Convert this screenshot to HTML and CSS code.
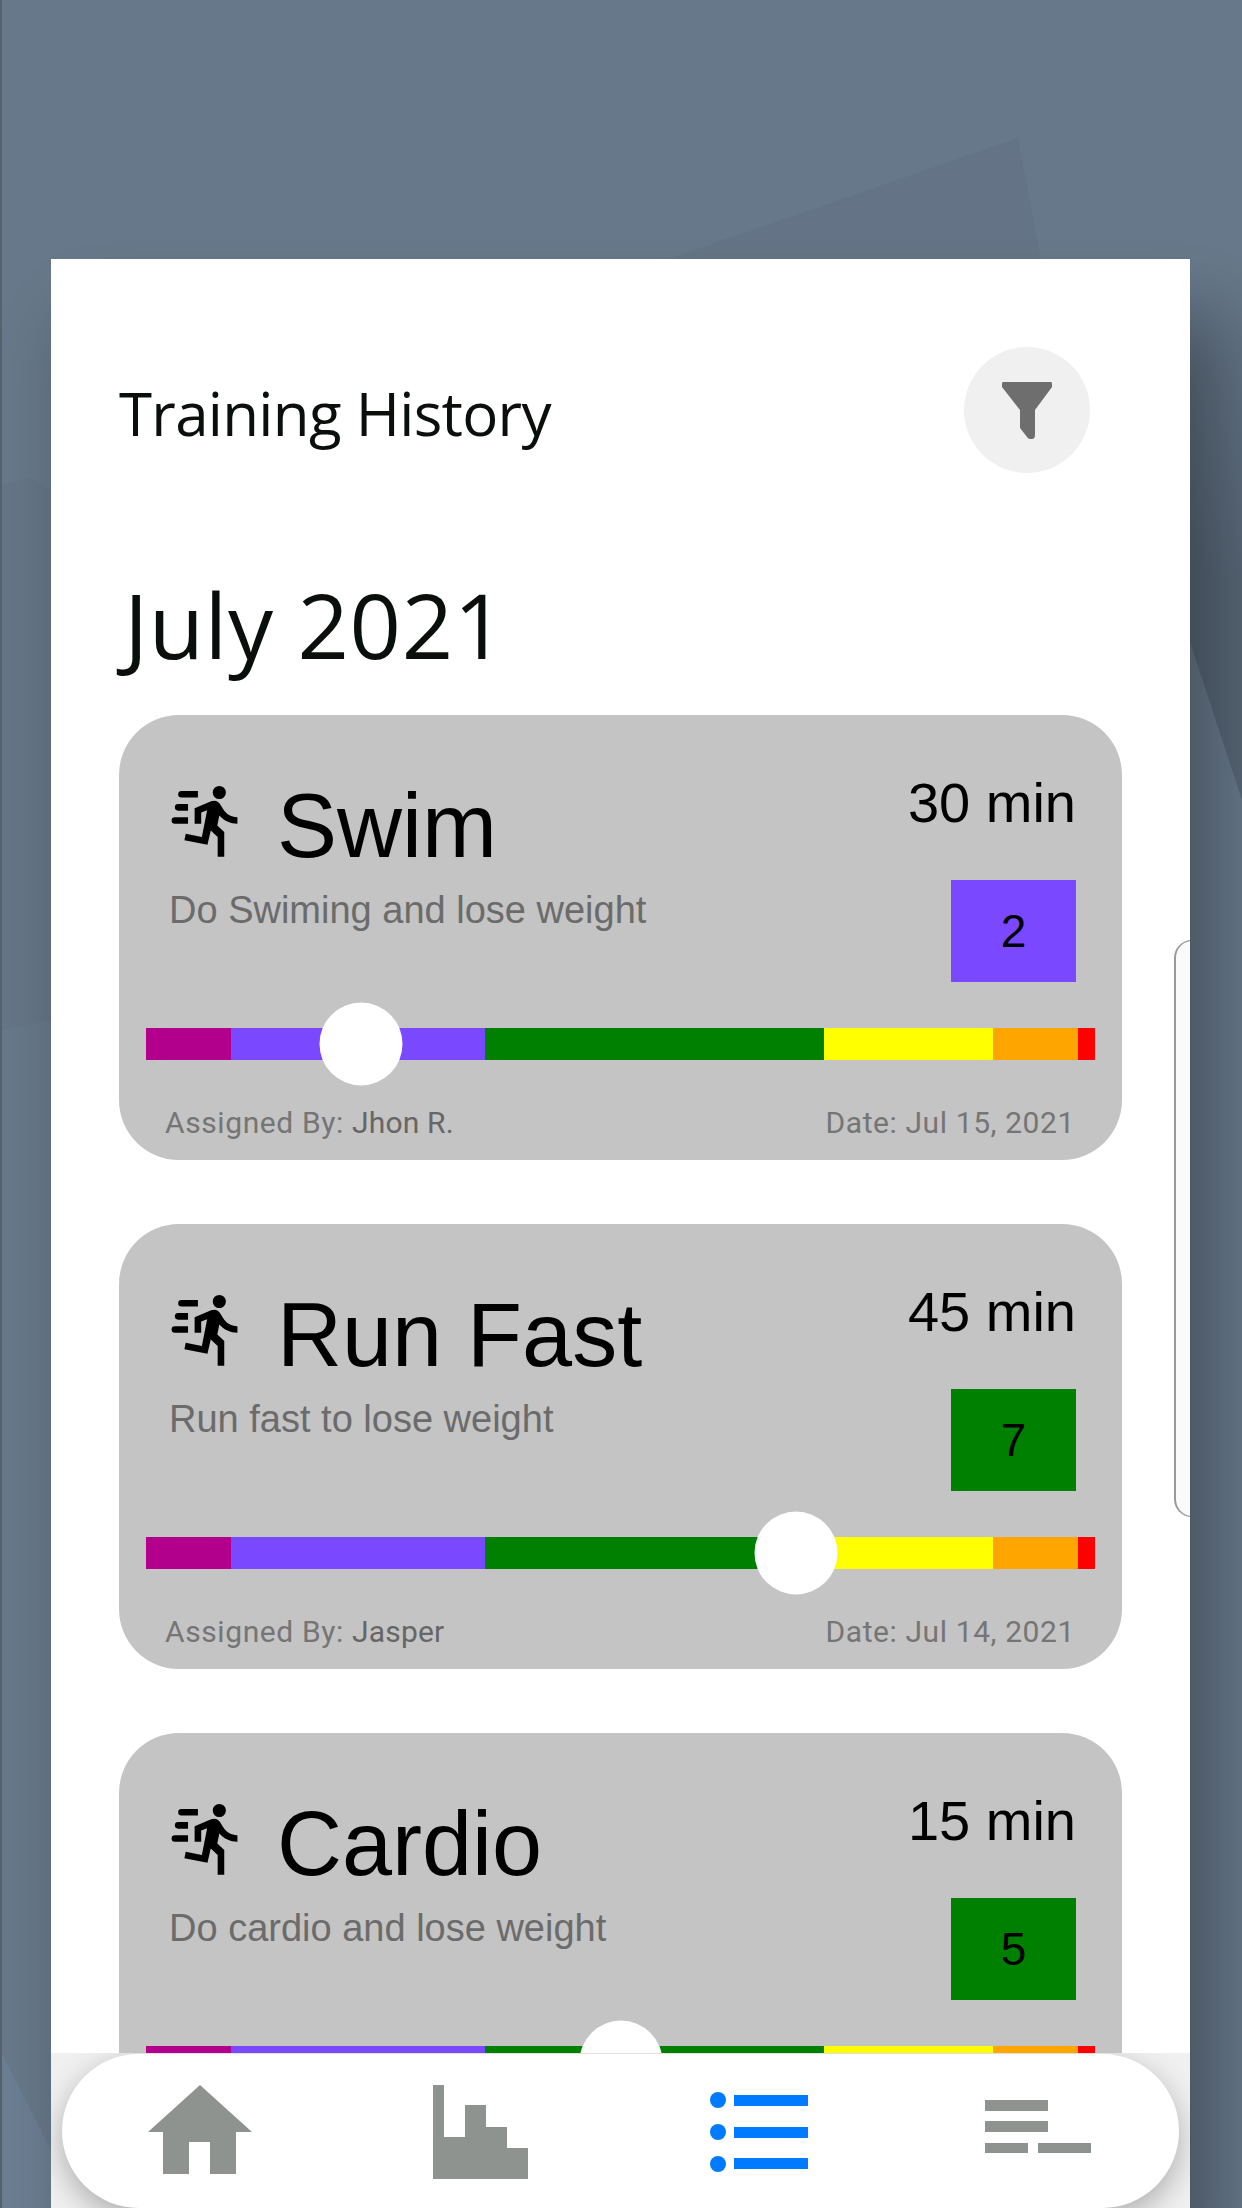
FILE: index.html
```html
<!DOCTYPE html>
<html lang="en">
<head>
  <meta charset="UTF-8" />
  <meta name="viewport" content="width=device-width, initial-scale=1.0"/>
  <title>Training History</title>
  <link rel="stylesheet" href="styles.css">
</head>
<body>
  <!-- Wallpaper facets behind the panel -->
  <svg class="wallpaper" viewBox="0 0 1242 2208" aria-hidden="true">
    <defs>
      <linearGradient id="fade-top" x1="0" y1="0" x2="0" y2="1">
        <stop offset="0" stop-color="#3f4a57" stop-opacity="0"/>
        <stop offset="0.6" stop-color="#3f4a57" stop-opacity="0.4"/>
      </linearGradient>
    </defs>
    <polygon points="1018,138 669,259 1041,259" fill="#5c6a7c" fill-opacity="0.22"/>
    <polygon points="1190,259 1242,259 1242,800 1190,642" fill="url(#fade-top)"/>
    <polygon points="0,485 30,478 51,490 51,1020 0,1030" fill="#5f6f81" fill-opacity="0.3"/>
    <polygon points="0,2050 51,2150 51,2208 0,2208" fill="#72849a" fill-opacity="0.5"/>
    <rect x="0" y="0" width="2" height="2208" fill="#56626e"/>
  </svg>

  <!-- Shared run icon -->
  <svg class="defs" aria-hidden="true">
    <symbol id="run-fast" viewBox="0 0 24 24">
      <path d="M16.5,5.5A2,2 0 0,0 18.5,3.5A2,2 0 0,0 16.5,1.5A2,2 0 0,0 14.5,3.5A2,2 0 0,0 16.5,5.5M12.9,19.4L13.9,15L16,17V23H18V15.5L15.9,13.5L16.5,10.5C17.89,12.09 19.89,13 22,13V11C20.24,11.03 18.6,10.11 17.7,8.6L16.7,7C16.34,6.4 15.7,6 15,6C14.7,6 14.5,6.1 14.2,6.1L9,8.3V13H11V9.6L12.8,8.9L11.2,17L6.3,16L5.9,18L12.9,19.4M4,9A1,1 0 0,1 3,8A1,1 0 0,1 4,7H7V9H4M5,5A1,1 0 0,1 4,4A1,1 0 0,1 5,3H10V5H5M3,13A1,1 0 0,1 2,12A1,1 0 0,1 3,11H7V13H3Z"/>
    </symbol>
  </svg>

  <div class="panel">
    <header class="top">
      <h1 class="page-title">Training History</h1>
      <button class="filter-btn" aria-label="Filter">
        <svg viewBox="0 0 50 58" width="50" height="58">
          <path d="M1,0H49Q50,0 50,2V5L33,28V53Q33,57 30,57H28Q26,57 25,55L18,46V28L0,5V2Q0,0 1,0Z"/>
        </svg>
      </button>
    </header>

    <h2 class="month">July 2021</h2>

    <section class="history">
      <article class="card">
        <div class="card-top">
          <div class="card-info">
            <div class="card-name">
              <svg class="run-icon"><use href="#run-fast"/></svg>
              <span>Swim</span>
            </div>
            <p class="card-desc">Do Swiming and lose weight</p>
          </div>
          <div class="card-side">
            <div class="duration">30 min</div>
            <div class="level level-purple">2</div>
          </div>
        </div>
        <div class="scale">
          <i class="seg seg-1"></i><i class="seg seg-2"></i><i class="seg seg-3"></i><i class="seg seg-4"></i><i class="seg seg-5"></i><i class="seg seg-6"></i>
          <span class="thumb" style="left: 22.7%"></span>
        </div>
        <div class="card-foot">
          <span>Assigned By: <b>Jhon R.</b></span>
          <span>Date: Jul 15, 2021</span>
        </div>
      </article>

      <article class="card">
        <div class="card-top">
          <div class="card-info">
            <div class="card-name">
              <svg class="run-icon"><use href="#run-fast"/></svg>
              <span>Run Fast</span>
            </div>
            <p class="card-desc">Run fast to lose weight</p>
          </div>
          <div class="card-side">
            <div class="duration">45 min</div>
            <div class="level level-green">7</div>
          </div>
        </div>
        <div class="scale">
          <i class="seg seg-1"></i><i class="seg seg-2"></i><i class="seg seg-3"></i><i class="seg seg-4"></i><i class="seg seg-5"></i><i class="seg seg-6"></i>
          <span class="thumb" style="left: 68.5%"></span>
        </div>
        <div class="card-foot">
          <span>Assigned By: <b>Jasper</b></span>
          <span>Date: Jul 14, 2021</span>
        </div>
      </article>

      <article class="card">
        <div class="card-top">
          <div class="card-info">
            <div class="card-name">
              <svg class="run-icon"><use href="#run-fast"/></svg>
              <span>Cardio</span>
            </div>
            <p class="card-desc">Do cardio and lose weight</p>
          </div>
          <div class="card-side">
            <div class="duration">15 min</div>
            <div class="level level-green">5</div>
          </div>
        </div>
        <div class="scale">
          <i class="seg seg-1"></i><i class="seg seg-2"></i><i class="seg seg-3"></i><i class="seg seg-4"></i><i class="seg seg-5"></i><i class="seg seg-6"></i>
          <span class="thumb" style="left: 50%"></span>
        </div>
      </article>

      <aside class="side-tab"></aside>
    </section>

    <div class="nav-strip">
      <nav class="tabbar">
        <a class="tab tab-home" aria-label="Home">
          <svg viewBox="0 0 104 89" width="104" height="89">
            <path d="M52,0L104,47H88V89H62V57H41V89H15V47H0Z"/>
          </svg>
        </a>
        <a class="tab" aria-label="Stats">
          <svg viewBox="0 0 95 94" width="95" height="94">
            <path d="M0,0H11V52H32V20H53V42H74V63H95V94H0Z"/>
          </svg>
        </a>
        <a class="tab tab-active" aria-label="History">
          <svg viewBox="0 0 98 80" width="98" height="80">
            <circle cx="8" cy="8" r="8"/><rect x="24" y="3" width="74" height="11"/>
            <circle cx="8" cy="40" r="8"/><rect x="24" y="35" width="74" height="11"/>
            <circle cx="8" cy="72" r="8"/><rect x="24" y="66" width="74" height="11"/>
          </svg>
        </a>
        <a class="tab tab-plans" aria-label="Plans">
          <svg viewBox="0 0 106 53" width="106" height="53">
            <rect x="0" y="0" width="63" height="11"/>
            <rect x="0" y="21" width="63" height="11"/>
            <rect x="0" y="43" width="43" height="10"/>
            <rect x="53" y="43" width="53" height="10"/>
          </svg>
        </a>
      </nav>
    </div>
  </div>
</body>
</html>
```

FILE: styles.css
```css
/* Base */
* { box-sizing: border-box; margin: 0; padding: 0; }
html, body { height: 100%; overflow: hidden; }
body {
  background: #67788a;
  font-family: "Liberation Sans", Arial, sans-serif;
  color: #000;
}
.wallpaper {
  position: absolute;
  top: 0; left: 0;
  width: 1242px;
  height: 2208px;
}
.defs { position: absolute; width: 0; height: 0; }

/* White sheet */
.panel {
  position: relative;
  display: flex;
  flex-direction: column;
  width: 1139px;
  height: 1949px;
  margin: 259px 0 0 51px;
  background: #fff;
  box-shadow: 25px 60px 70px rgba(0, 0, 0, 0.33);
}

/* Header */
.top {
  display: flex;
  align-items: flex-start;
  justify-content: space-between;
  padding: 88px 100px 0 68px;
}
.page-title {
  font-family: "Open Sans", "Noto Sans", sans-serif;
  font-size: 60px;
  font-weight: 400;
  letter-spacing: -0.7px;
  line-height: 126px;
  margin-top: 3px;
  color: #0a0f0c;
}
.filter-btn {
  display: flex;
  align-items: center;
  justify-content: center;
  width: 126px;
  height: 126px;
  border: none;
  border-radius: 50%;
  background: #f0f0f0;
}
.filter-btn svg { fill: #6e6e6e; margin-top: 2px; }
.month {
  padding-left: 73px;
  margin-top: 98px;
  font-family: "Open Sans", "Noto Sans", sans-serif;
  font-size: 90px;
  font-weight: 400;
  letter-spacing: 0.6px;
  line-height: 100px;
  color: #0a0f0c;
}

.history {
  position: relative;
  flex: 1;
  min-height: 0;
  overflow: hidden;
  padding: 0 68px;
  margin-top: 41px;
}
.card {
  padding: 58px 27px 18px;
  height: 445px;
  margin-bottom: 64px;
  border-radius: 60px;
  background: #c4c4c4;
}
.card-top {
  display: flex;
  justify-content: space-between;
  padding: 0 19px;
}
.card-info { padding-top: 8px; }
.card-name {
  display: flex;
  align-items: flex-start;
  gap: 33px;
  font-size: 90px;
  line-height: 90px;
}
.run-icon { width: 79px; height: 79px; fill: #000; }
.card-desc {
  margin-top: 17px;
  padding-left: 4px;
  font-size: 38px;
  line-height: 44px;
  color: #6b6b6b;
}
.card-side {
  display: flex;
  flex-direction: column;
  align-items: flex-end;
}
.duration { font-size: 56px; line-height: 59px; }
.level {
  display: flex;
  align-items: center;
  justify-content: center;
  width: 125px;
  height: 102px;
  margin-top: 48px;
  font-size: 46px;
}
.level-purple { background: #7a49ff; }
.level-green { background: #008000; }

/* Level bar */
.scale {
  position: relative;
  display: flex;
  height: 32px;
  margin-top: 46px;
}
.seg { display: block; height: 100%; }
.seg-1 { flex: 5;  background: #b3008c; }
.seg-2 { flex: 15; background: #7a49ff; }
.seg-3 { flex: 20; background: #008000; }
.seg-4 { flex: 10; background: #ffff00; }
.seg-5 { flex: 5;  background: #ffa500; }
.seg-6 { flex: 1;  background: #ff0000; }
.thumb {
  position: absolute;
  top: 50%;
  width: 83px;
  height: 83px;
  border-radius: 50%;
  background: #fff;
  transform: translate(-50%, -50%);
}
.card-foot {
  display: flex;
  justify-content: space-between;
  padding: 0 20px 0 19px;
  margin-top: 45px;
  font-family: Roboto, sans-serif;
  font-size: 30px;
  letter-spacing: 0.6px;
  line-height: 36px;
  color: #757575;
}
.card-foot b { font-weight: 400; color: #666; letter-spacing: 0.2px; }

/* Edge handle, cut off by the sheet */
.side-tab {
  position: absolute;
  top: 225px;
  right: -20px;
  width: 36px;
  height: 577px;
  border: 1px solid #999;
  border-left-width: 2px;
  border-radius: 20px;
  background: #fafafa;
}

/* Bottom tabs */
.nav-strip {
  height: 155px;
  padding: 1px 11px 0;
  background: #f0f0f0;
  overflow: hidden;
}
.tabbar {
  display: grid;
  grid-template-columns: repeat(4, 1fr);
  align-items: start;
  height: 154px;
  padding-top: 31px;
  border-radius: 77px;
  background: #fff;
  box-shadow: 0 10px 30px rgba(0, 0, 0, 0.28);
}
.tab { display: flex; justify-content: center; fill: #8f9390; }
.tab-home { margin-right: 3px; }
.tab-active { fill: #007aff; margin: 7px 3px 0 0; }
.tab-plans { margin: 15px 2px 0 0; }
```
